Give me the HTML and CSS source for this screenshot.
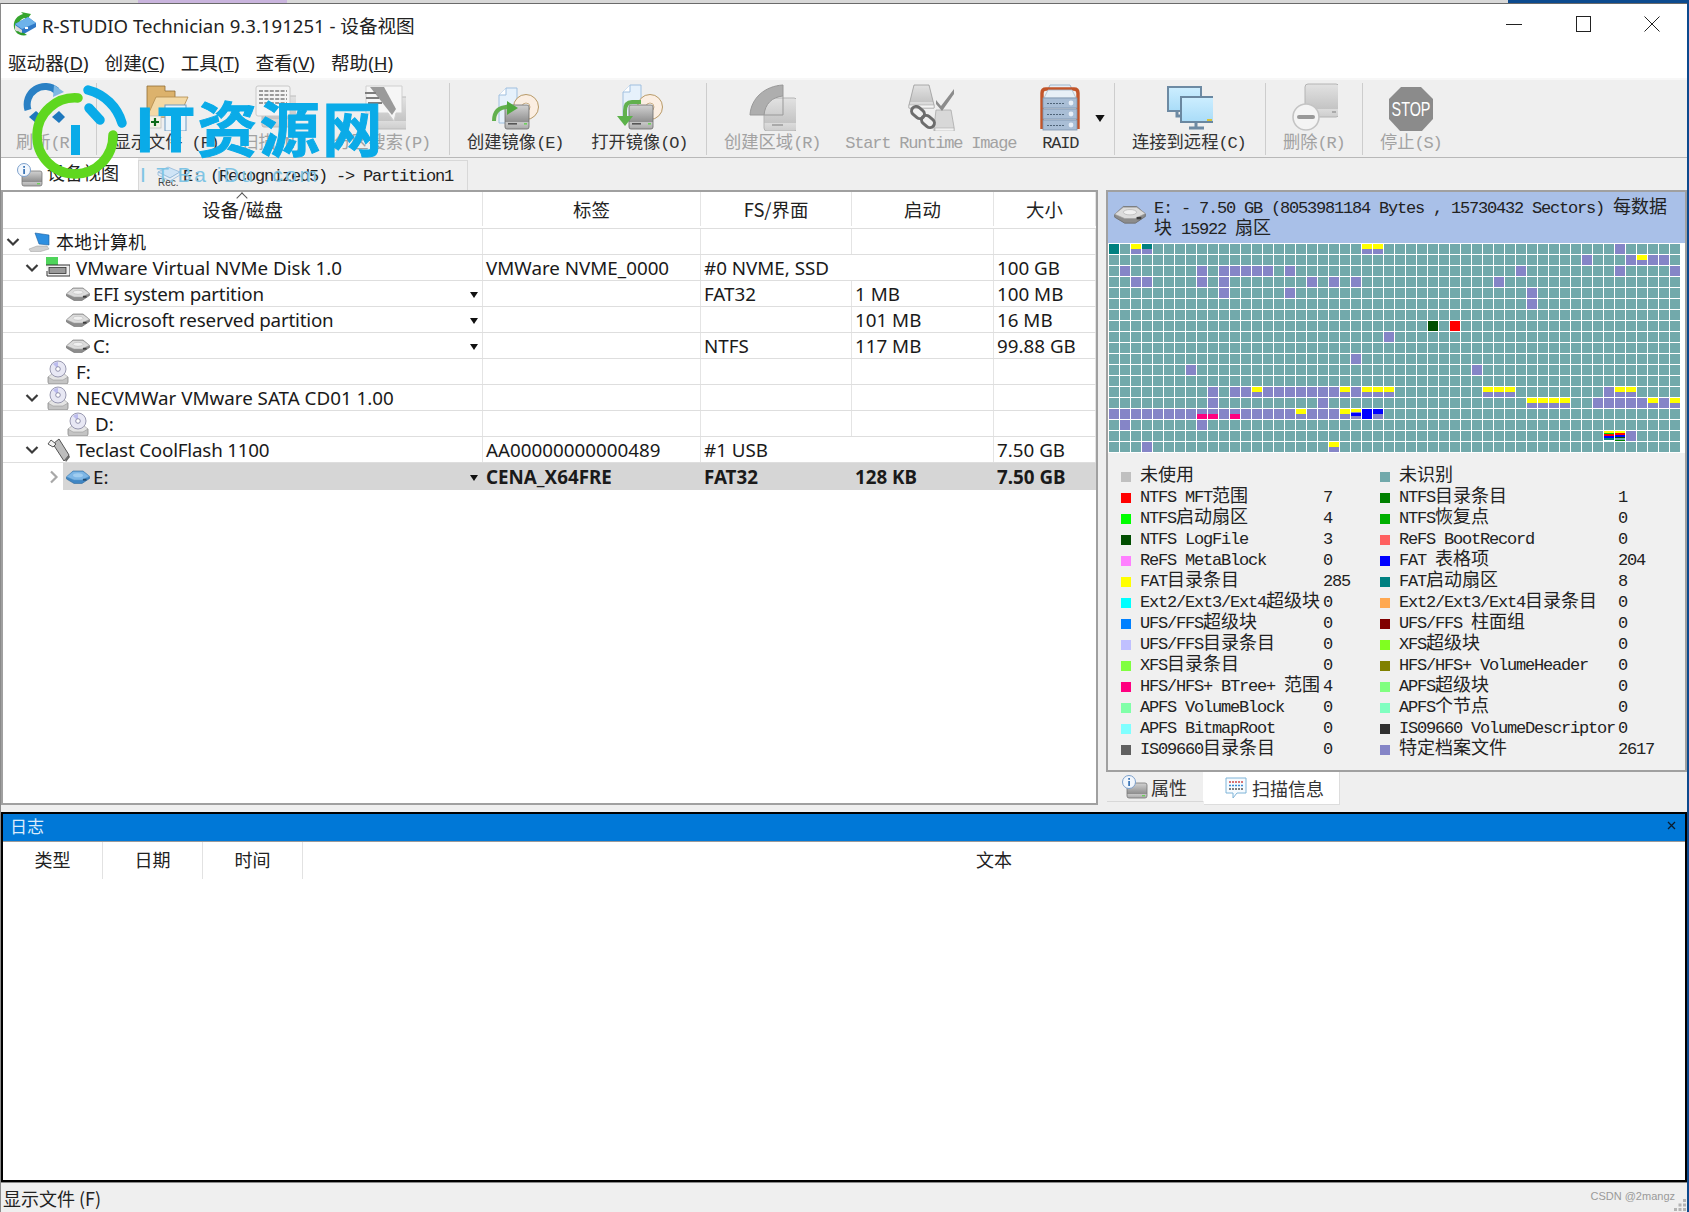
FILE: index.html
```html
<!DOCTYPE html>
<html lang="zh-CN">
<head>
<meta charset="utf-8">
<title>R-STUDIO Technician</title>
<link rel="stylesheet" href="styles.css">
</head>
<body>
<svg class="defs" width="0" height="0" aria-hidden="true">
  <defs>
    <linearGradient id="gDrive" x1="0" y1="0" x2="0" y2="1"><stop offset="0" stop-color="#d2d2d2"/><stop offset=".72" stop-color="#8e8e8e"/><stop offset=".73" stop-color="#c8c8c8"/><stop offset="1" stop-color="#a8a8a8"/></linearGradient>
    <linearGradient id="gDriveOff" x1="0" y1="0" x2="0" y2="1"><stop offset="0" stop-color="#e2e2e2"/><stop offset=".75" stop-color="#c4c4c4"/><stop offset=".76" stop-color="#dcdcdc"/><stop offset="1" stop-color="#cdcdcd"/></linearGradient>
    <linearGradient id="gMon" x1="0" y1="0" x2="0" y2="1"><stop offset="0" stop-color="#cdeeff"/><stop offset="1" stop-color="#a9dcf8"/></linearGradient>
    <symbol id="part" viewBox="0 0 24 14">
      <path d="M0.500 7 L7 1 H17 L23.500 6.500 V8.500 L16 13.500 H8 L0.500 9Z" fill="#8c8c8c" stroke="#6a6a6a" stroke-width=".6"/>
      <path d="M0.500 6.800 L8 10 H16 L23.500 6.300 L17 1.500 H7Z" fill="#dcdcdc" stroke="#a0a0a0" stroke-width=".5"/>
      <ellipse cx="12" cy="5.300" rx="5" ry="2" fill="#f0f0f0" stroke="#b0b0b0" stroke-width=".5"/>
      <rect x="17" y="8.800" width="3.500" height="1.800" fill="#3c3c3c"/>
    </symbol>
    <symbol id="partblue" viewBox="0 0 24 14">
      <path d="M0.500 7 L7 1 H17 L23.500 6.500 V8.500 L16 13.500 H8 L0.500 9Z" fill="#3f86c4" stroke="#2f6a9c" stroke-width=".6"/>
      <path d="M0.500 6.800 L8 10 H16 L23.500 6.300 L17 1.500 H7Z" fill="#7db6e6" stroke="#5a94c4" stroke-width=".5"/>
      <ellipse cx="12" cy="5.300" rx="5" ry="2" fill="#a0cdf0"/>
      <rect x="17" y="8.800" width="3.500" height="1.800" fill="#204a70"/>
    </symbol>
    <symbol id="cd" viewBox="0 0 24 24">
      <path d="M2 17 H22 V22 Q22 24 20 24 H4 Q2 24 2 22Z" fill="#c4c4c4" stroke="#888" stroke-width=".8"/>
      <path d="M2 17 L7 13 H17 L22 17 L17 20 H7Z" fill="#e4e4e4" stroke="#999" stroke-width=".6"/>
      <circle cx="12" cy="9" r="8" fill="#e8e8f4" stroke="#8e8ea8" stroke-width=".9"/>
      <path d="M7 4 A7 7 0 0 1 12 2 L12 9Z" fill="#bcbcee"/>
      <circle cx="12" cy="9" r="2.300" fill="#fff" stroke="#7a7a9a" stroke-width=".8"/>
    </symbol>
    <symbol id="chev" viewBox="0 0 14 10"><path d="M1.500 2 L7 7.500 L12.500 2" fill="none" stroke="#3a3a3a" stroke-width="2.200"/></symbol>
    <symbol id="tri" viewBox="0 0 8 6"><path d="M0 0H8L4 6Z" fill="#111"/></symbol>
    <symbol id="idrive" viewBox="0 0 26 24">
      <rect x="5" y="8" width="20" height="15" rx="2" fill="url(#gDrive)" stroke="#777" stroke-width=".8"/>
      <rect x="20" y="20" width="3" height="1.400" fill="#6ecf5c"/>
      <circle cx="7" cy="7" r="6.500" fill="#f2f7fd" stroke="#7ca0cc"/>
      <rect x="6.200" y="6" width="1.800" height="5" fill="#3f78b8"/>
      <rect x="6.200" y="3" width="1.800" height="1.800" fill="#3f78b8"/>
    </symbol>
  </defs>
</svg>
<div class="desk">
  <div class="strip"><span class="s-a"></span><span class="s-b"></span><span class="s-c"></span><span class="s-d"></span></div>
  <div class="window">
    <header class="titlebar">
      <svg class="appicon" width="25" height="24" viewBox="0 0 25 24">
        <path d="M4 20 C-1 13 3 4 11 2 L9 0 L19 2 L14 9 L13 6 C7 7 5 13 8 20Z" fill="#36a52e"/>
        <path d="M3 12 L16 5 L24 11 V15 L10 23 L3 17Z" fill="#2f78c6"/>
        <path d="M3 12 L10 17 L24 11 L16 5Z" fill="#6db3ea"/>
        <path d="M3 13 L10 18 V23 L3 18Z" fill="#d9d9d9"/>
        <path d="M4 20 C6 23 11 24 15 23 L12 21 C9 21 7 20 6 19Z" fill="#2e9c2a"/>
        <rect x="13" y="15" width="3" height="2" fill="#fff"/>
      </svg>
      <span class="apptitle">R-STUDIO Technician 9.3.191251 - 设备视图</span>
      <div class="winctl">
        <svg width="16" height="16" viewBox="0 0 16 16"><path d="M0 8.500H16" stroke="#222"/></svg>
        <svg width="16" height="16" viewBox="0 0 16 16"><rect x="1.500" y=".5" width="14" height="15" fill="none" stroke="#222"/></svg>
        <svg width="16" height="16" viewBox="0 0 16 16"><path d="M.5 .5L15.500 15.500M15.500 .5L.5 15.500" stroke="#222"/></svg>
      </div>
    </header>
    <nav class="menubar">
      <span>驱动器(<u>D</u>)</span><span>创建(<u>C</u>)</span><span>工具(<u>T</u>)</span><span>查看(<u>V</u>)</span><span>帮助(<u>H</u>)</span>
    </nav>
    <div class="toolbar">
      <div class="tgroup g1">
        <div class="tbtn off">
          <svg width="48" height="48" viewBox="0 0 48 48"><path d="M5 27 A18 18 0 0 1 34 8" fill="none" stroke="#2a80c4" stroke-width="7"/><path d="M31 2 L41 9 L30 14Z" fill="#7db8e4"/><path d="M6 34 L13 28 L20 34 L13 40Z" fill="#1e78bd"/><path d="M29 34 L36 28 L42 34 L36 40Z" fill="#1e78bd"/></svg>
          <span class="lbl"><span class="c">刷新</span>(R)</span>
        </div>
      </div>
      <div class="tgroup g2">
        <div class="tbtn">
          <svg width="48" height="48" viewBox="0 0 48 48">
            <path d="M5 3 H23 V8 H33 V34 H5Z" fill="#dcb26c" stroke="#8f6d35" stroke-width=".8"/>
            <path d="M5 34 L14 14 H46 L37 34Z" fill="#f3d9a6" stroke="#b08a4c" stroke-width=".8"/>
            <rect x="23" y="22" width="21" height="26" fill="#eaf4fb" stroke="#6f9cc4"/>
            <rect x="30" y="28" width="8" height="14" fill="#fff" stroke="#b8cfe2" stroke-width=".6"/>
            <rect x="7" y="33" width="12" height="12" fill="#f4f4e8" stroke="#bbb" stroke-width=".7"/>
            <path d="M13 35 V43 M9 39 H17" stroke="#0e6b1a" stroke-width="2.200"/>
          </svg>
          <span class="lbl"><span class="c">显示文件</span> (F)</span>
        </div>
        <div class="tbtn off">
          <svg width="48" height="48" viewBox="0 0 48 48">
            <rect x="14" y="13" width="38" height="31" rx="2" fill="url(#gDriveOff)" stroke="#bbb"/>
            <rect x="8" y="3" width="34" height="30" rx="2" fill="#f4f4f4" stroke="#c8c8c8"/>
            <path d="M11 8H39M11 12H39M11 16H39M11 20H39" stroke="#9a9a9a" stroke-width="2" stroke-dasharray="4 1.400"/>
          </svg>
          <span class="lbl"><span class="c">扫描</span>(N)</span>
        </div>
        <div class="tbtn off">
          <svg width="48" height="48" viewBox="0 0 48 48">
            <rect x="14" y="14" width="36" height="32" rx="2" fill="url(#gDriveOff)" stroke="#bbb"/>
            <path d="M8 3 H44 V30 L38 30 L36 38 L30 30 H8Z" fill="#f6f6f6" stroke="#cfcfcf"/>
            <path d="M12 4 H26 L38 26 L34 32 Z" fill="#9a9a9a"/>
            <path d="M7 10H18M8 15H21M10 20H24" stroke="#7e7e7e" stroke-width="2"/>
          </svg>
          <span class="lbl"><span class="c">分区搜索</span>(P)</span>
        </div>
      </div>
      <div class="tgroup g3">
        <div class="tbtn">
          <svg width="48" height="48" viewBox="0 0 48 48">
            <path d="M8 12 L15 5 H26 V40 H8Z" fill="#e6f1fb" stroke="#9fbfdf"/>
            <path d="M15 5 V12 H8" fill="#fff" stroke="#9fbfdf"/>
            <circle cx="35" cy="24" r="12.500" fill="#fbeee2" stroke="#b89a68"/>
            <circle cx="35" cy="24" r="4" fill="#fff" stroke="#c8ad85"/>
            <rect x="14" y="22" width="24" height="24" rx="2" fill="url(#gDrive)" stroke="#6a6a6a" stroke-width=".8"/>
            <rect x="17" y="40" width="9" height="1.600" fill="#555"/><rect x="33" y="40" width="3" height="1.600" fill="#6ecf5c"/>
            <path d="M3 38 C3 28 8 24 17 24" fill="none" stroke="#62b04e" stroke-width="4"/>
            <path d="M16 18 L27 25 L16 32Z" fill="#4fa83e"/>
          </svg>
          <span class="lbl"><span class="c">创建镜像</span>(E)</span>
        </div>
        <div class="tbtn">
          <svg width="48" height="48" viewBox="0 0 48 48">
            <path d="M8 9 L15 2 H26 V38 H8Z" fill="#e6f1fb" stroke="#9fbfdf"/>
            <path d="M15 2 V9 H8" fill="#fff" stroke="#9fbfdf"/>
            <circle cx="35" cy="24" r="12.500" fill="#fbeee2" stroke="#b89a68"/>
            <circle cx="35" cy="24" r="4" fill="#fff" stroke="#c8ad85"/>
            <rect x="14" y="22" width="24" height="24" rx="2" fill="url(#gDrive)" stroke="#6a6a6a" stroke-width=".8"/>
            <rect x="17" y="40" width="9" height="1.600" fill="#555"/><rect x="33" y="40" width="3" height="1.600" fill="#6ecf5c"/>
            <path d="M26 19 H17 C12 19 10 22 10 28 V35" fill="none" stroke="#62b04e" stroke-width="4"/>
            <path d="M2 33 H18 L10 43Z" fill="#5cb24a"/>
          </svg>
          <span class="lbl"><span class="c">打开镜像</span>(O)</span>
        </div>
      </div>
      <div class="tgroup g4">
        <div class="tbtn off">
          <svg width="48" height="48" viewBox="0 0 48 48">
            <rect x="16" y="15" width="33" height="33" rx="3" fill="url(#gDriveOff)" stroke="#b4b4b4"/>
            <rect x="24" y="41" width="11" height="2" fill="#aaa"/>
            <path d="M35 2 V13 C24 14 17 21 16 32 H2 C3 15 17 3 35 2Z" fill="#aeaeae" stroke="#999"/>
            <path d="M35 13 V32 H16" fill="none" stroke="#999" stroke-width="1"/>
          </svg>
          <span class="lbl"><span class="c">创建区域</span>(R)</span>
        </div>
        <div class="tbtn off rt">
          <svg width="48" height="48" viewBox="0 0 48 48">
            <path d="M7 2 H22 L27 22 V25 H2 V22Z" fill="url(#gDriveOff)" stroke="#9a9a9a" stroke-width=".8"/>
            <rect x="2" y="22" width="25" height="3" fill="#f4f4f4" stroke="#aaa" stroke-width=".6"/>
            <path d="M29 27 H44 L47 44 V48 H27 V44Z" fill="#d8d8d8" stroke="#aaa" stroke-width=".8"/>
            <rect x="28" y="45" width="19" height="3" fill="#f2f2f2" stroke="#aaa" stroke-width=".6"/>
            <path d="M29 17 L34 23 L47 6 L47 11 L35 28 L29 21Z" fill="#8c8c8c"/>
            <g fill="none" stroke="#6c6c6c" stroke-width="3"><rect x="4" y="25" width="14" height="9" rx="4.500" transform="rotate(40 11 29.500)"/><rect x="14" y="34" width="14" height="9" rx="4.500" transform="rotate(40 21 38.500)"/></g>
          </svg>
          <span class="lbl">Start Runtime Image</span>
        </div>
        <div class="tbtn raid">
          <svg width="48" height="48" viewBox="0 0 48 48">
            <path d="M12 6 L14 2 H34 L36 6Z" fill="#e6eef6" stroke="#9db4c9"/>
            <path d="M6 46 V10 Q6 6 10 6 H38 Q42 6 42 10 V46" fill="none" stroke="#c2552a" stroke-width="3.400"/>
            <path d="M8 15 L12 7 H36 L40 15Z" fill="#e8f0f7" stroke="#a6bacd" stroke-width=".8"/>
            <g fill="#a9bed6" stroke="#7e95ae" stroke-width=".8">
              <rect x="7" y="15" width="34" height="10"/><rect x="7" y="26" width="34" height="10"/><rect x="7" y="37" width="34" height="10"/>
            </g>
            <g stroke="#4f6478" stroke-width="1.200" stroke-dasharray="2 1">
              <path d="M11 20.500H28M11 31.500H28M11 42.500H28"/>
            </g>
            <g fill="#e8eff8"><circle cx="35" cy="20" r="2.400"/><circle cx="35" cy="31" r="2.400"/><circle cx="35" cy="42" r="2.400"/></g>
          </svg>
          <span class="lbl">RAID</span>
        </div>
        <svg class="raidarrow" width="12" height="7"><use href="#tri"/></svg>
      </div>
      <div class="tgroup g5">
        <div class="tbtn">
          <svg width="48" height="48" viewBox="0 0 48 48">
            <rect x="3" y="4" width="33" height="24" fill="url(#gMon)" stroke="#6d8aa3" stroke-width="2"/>
            <path d="M12 28V33H19" fill="none" stroke="#6d8aa3" stroke-width="3"/>
            <rect x="16" y="14" width="33" height="25" fill="url(#gMon)" stroke="#6a87a0" stroke-width="2"/>
            <rect x="42" y="36" width="5" height="2" fill="#d8c23a"/>
            <path d="M31 40V44M24 45H39" stroke="#6d8aa3" stroke-width="3"/>
          </svg>
          <span class="lbl"><span class="c">连接到远程</span>(C)</span>
        </div>
      </div>
      <div class="tgroup g6">
        <div class="tbtn off">
          <svg width="48" height="48" viewBox="0 0 48 48">
            <rect x="15" y="1" width="34" height="33" rx="3" fill="url(#gDriveOff)" stroke="#b4b4b4"/>
            <rect x="21" y="28" width="6" height="2" fill="#aaa"/><rect x="42" y="28" width="4" height="2" fill="#aaa"/>
            <circle cx="16" cy="34" r="13" fill="#f4f4f4" stroke="#c4c4c4" stroke-width="1.600"/>
            <rect x="7" y="32" width="18" height="4" rx="2" fill="#999"/>
          </svg>
          <span class="lbl"><span class="c">删除</span>(R)</span>
        </div>
      </div>
      <div class="tgroup g7">
        <div class="tbtn off">
          <svg width="48" height="48" viewBox="0 0 48 48">
            <path d="M14 4 H34 L46 16 V36 L34 49 H14 L2 36 V16Z" fill="#8b8b8b"/>
            <text class="stop" transform="translate(24 33) scale(.8 1.15)">STOP</text>
          </svg>
          <span class="lbl"><span class="c">停止</span>(S)</span>
        </div>
      </div>
    </div>
    <div class="viewtabs">
      <div class="vtab active">
        <svg width="26" height="24"><use href="#idrive"/></svg>
        <span class="c">设备视图</span>
      </div>
      <div class="vtab">
        <svg width="26" height="24" viewBox="0 0 26 24"><path d="M2 8 L12 3 L24 8 L14 14Z" fill="#cfe4f6" stroke="#8ab2d4" stroke-width=".7"/><path d="M2 8 V11 L14 17 L24 11 V8 L14 14Z" fill="#e6eff7" stroke="#8ab2d4" stroke-width=".7"/><text x="2" y="22" class="rec">Rec.</text></svg>
        <span>E: (Recognized5) -&gt; Partition1</span>
      </div>
    </div>
    <div class="panes">
      <section class="devices">
        <div class="row head">
          <div class="cell sorted">设备/磁盘</div><div class="cell">标签</div><div class="cell">FS/界面</div><div class="cell">启动</div><div class="cell">大小</div>
        </div>
        <div class="row">
          <div class="cell name l0"><svg class="chev" width="14" height="10"><use href="#chev"/></svg><svg class="ico" width="24" height="20" viewBox="0 0 24 20"><path d="M8 1 L22 3 V13 L12 12Z" fill="#2e8fe0" stroke="#1c5f9e" stroke-width=".6"/><path d="M2 17 L10 14 H20 L22 17 L12 20H4Z" fill="#d0d0d0" stroke="#9a9a9a" stroke-width=".5"/></svg><span class="zh">本地计算机</span></div><div class="cell"></div><div class="cell"></div><div class="cell"></div><div class="cell"></div>
        </div>
        <div class="row">
          <div class="cell name l1"><svg class="chev" width="14" height="10"><use href="#chev"/></svg><svg class="ico" width="24" height="22" viewBox="0 0 24 22"><path d="M0 0H12V8H0Z" fill="#4ed45a"/><path d="M0 8 H24 V19 H1 V14" fill="#f0f0f0" stroke="#333"/><rect x="3" y="10.500" width="17" height="6" fill="#9a9a9a" stroke="#333" stroke-width=".8"/></svg><span>VMware Virtual NVMe Disk 1.0</span></div><div class="cell">VMWare NVME_0000</div><div class="cell span2">#0 NVME, SSD</div><div class="cell">100 GB</div>
        </div>
        <div class="row">
          <div class="cell name l2"><span class="chev"></span><svg class="ico" width="24" height="14"><use href="#part"/></svg><span class="tight">EFI system partition</span><svg class="drop" width="8" height="6"><use href="#tri"/></svg></div><div class="cell"></div><div class="cell">FAT32</div><div class="cell">1 MB</div><div class="cell">100 MB</div>
        </div>
        <div class="row">
          <div class="cell name l2"><span class="chev"></span><svg class="ico" width="24" height="14"><use href="#part"/></svg><span class="tight">Microsoft reserved partition</span><svg class="drop" width="8" height="6"><use href="#tri"/></svg></div><div class="cell"></div><div class="cell"></div><div class="cell">101 MB</div><div class="cell">16 MB</div>
        </div>
        <div class="row">
          <div class="cell name l2"><span class="chev"></span><svg class="ico" width="24" height="14"><use href="#part"/></svg><span>C:</span><svg class="drop" width="8" height="6"><use href="#tri"/></svg></div><div class="cell"></div><div class="cell">NTFS</div><div class="cell">117 MB</div><div class="cell">99.88 GB</div>
        </div>
        <div class="row">
          <div class="cell name l1"><span class="chev"></span><svg class="ico" width="24" height="24"><use href="#cd"/></svg><span>F:</span></div><div class="cell"></div><div class="cell"></div><div class="cell"></div><div class="cell"></div>
        </div>
        <div class="row">
          <div class="cell name l1"><svg class="chev" width="14" height="10"><use href="#chev"/></svg><svg class="ico" width="24" height="24"><use href="#cd"/></svg><span>NECVMWar VMware SATA CD01 1.00</span></div><div class="cell"></div><div class="cell"></div><div class="cell"></div><div class="cell"></div>
        </div>
        <div class="row">
          <div class="cell name l2"><span class="chev"></span><svg class="ico" width="24" height="24"><use href="#cd"/></svg><span class="pad">D:</span></div><div class="cell"></div><div class="cell"></div><div class="cell"></div><div class="cell"></div>
        </div>
        <div class="row">
          <div class="cell name l1"><svg class="chev" width="14" height="10"><use href="#chev"/></svg><svg class="ico" width="24" height="24" viewBox="0 0 24 24"><path d="M7 6 L13 1 L23 17 L18 23 Z" fill="#bdbdbd" stroke="#555"/><path d="M2 6 L5 2 L10 6 L7 9Z" fill="#f4f4f4" stroke="#555"/><path d="M19 22 L23 17 L24 19 L20 24Z" fill="#666"/></svg><span class="tight">Teclast CoolFlash 1100</span></div><div class="cell">AA00000000000489</div><div class="cell span2">#1 USB</div><div class="cell">7.50 GB</div>
        </div>
        <div class="row sel">
          <div class="cell name l2"><svg class="chev more" width="10" height="14" viewBox="0 0 10 14"><path d="M2 1.500 L7.500 7 L2 12.500" fill="none" stroke="#a8a8a8" stroke-width="2.200"/></svg><svg class="ico" width="24" height="14"><use href="#partblue"/></svg><span>E:</span><svg class="drop" width="8" height="6"><use href="#tri"/></svg></div><div class="cell">CENA_X64FRE</div><div class="cell">FAT32</div><div class="cell">128 KB</div><div class="cell">7.50 GB</div>
        </div>
      </section>
      <div class="side">
        <section class="scan">
          <div class="scanhead">
            <svg class="headico" width="32" height="19"><use href="#part"/></svg>
            <p>E: - 7.50 GB (8053981184 Bytes , 15730432 Sectors) <span class="c">每数据块</span> 15922 <span class="c">扇区</span></p>
          </div>
          <div class="mapwrap"><div class="map" id="map"></div></div>
          <div class="legend">
            <div class="lg"><i class="k-unused"></i><span><span class="c">未使用</span></span><span></span></div>
            <div class="lg"><i class="k-unk"></i><span><span class="c">未识别</span></span><span></span></div>
            <div class="lg"><i class="k-mft"></i><span>NTFS MFT<span class="c">范围</span></span><span>7</span></div>
            <div class="lg"><i class="k-ntdir"></i><span>NTFS<span class="c">目录条目</span></span><span>1</span></div>
            <div class="lg"><i class="k-ntboot"></i><span>NTFS<span class="c">启动扇区</span></span><span>4</span></div>
            <div class="lg"><i class="k-ntres"></i><span>NTFS<span class="c">恢复点</span></span><span>0</span></div>
            <div class="lg"><i class="k-ntlog"></i><span>NTFS LogFile</span><span>3</span></div>
            <div class="lg"><i class="k-rboot"></i><span>ReFS BootRecord</span><span>0</span></div>
            <div class="lg"><i class="k-rmeta"></i><span>ReFS MetaBlock</span><span>0</span></div>
            <div class="lg"><i class="k-fat"></i><span>FAT <span class="c">表格项</span></span><span>204</span></div>
            <div class="lg"><i class="k-fatdir"></i><span>FAT<span class="c">目录条目</span></span><span>285</span></div>
            <div class="lg"><i class="k-fatboot"></i><span>FAT<span class="c">启动扇区</span></span><span>8</span></div>
            <div class="lg"><i class="k-extsb"></i><span>Ext2/Ext3/Ext4<span class="c">超级块</span></span><span>0</span></div>
            <div class="lg"><i class="k-extdir"></i><span>Ext2/Ext3/Ext4<span class="c">目录条目</span></span><span>0</span></div>
            <div class="lg"><i class="k-ufssb"></i><span>UFS/FFS<span class="c">超级块</span></span><span>0</span></div>
            <div class="lg"><i class="k-ufscg"></i><span>UFS/FFS <span class="c">柱面组</span></span><span>0</span></div>
            <div class="lg"><i class="k-ufsdir"></i><span>UFS/FFS<span class="c">目录条目</span></span><span>0</span></div>
            <div class="lg"><i class="k-xfssb"></i><span>XFS<span class="c">超级块</span></span><span>0</span></div>
            <div class="lg"><i class="k-xfsdir"></i><span>XFS<span class="c">目录条目</span></span><span>0</span></div>
            <div class="lg"><i class="k-hfsvol"></i><span>HFS/HFS+ VolumeHeader</span><span>0</span></div>
            <div class="lg"><i class="k-hfsbt"></i><span>HFS/HFS+ BTree+ <span class="c">范围</span></span><span>4</span></div>
            <div class="lg"><i class="k-apsb"></i><span>APFS<span class="c">超级块</span></span><span>0</span></div>
            <div class="lg"><i class="k-apvol"></i><span>APFS VolumeBlock</span><span>0</span></div>
            <div class="lg"><i class="k-apnode"></i><span>APFS<span class="c">个节点</span></span><span>0</span></div>
            <div class="lg"><i class="k-apbmp"></i><span>APFS BitmapRoot</span><span>0</span></div>
            <div class="lg"><i class="k-isovol"></i><span>IS09660 VolumeDescriptor</span><span>0</span></div>
            <div class="lg"><i class="k-isodir"></i><span>IS09660<span class="c">目录条目</span></span><span>0</span></div>
            <div class="lg"><i class="k-spec"></i><span><span class="c">特定档案文件</span></span><span>2617</span></div>
          </div>
        </section>
        <div class="sidetabs">
          <div class="stab"><svg width="26" height="24"><use href="#idrive"/></svg><span class="c">属性</span></div>
          <div class="stab active">
            <svg width="22" height="22" viewBox="0 0 22 22"><path d="M1 1H21V16H12L8 21V16H1Z" fill="#f6fbff" stroke="#7fb4d8"/><path d="M4 5H18" stroke="#d04848" stroke-width="1.500" stroke-dasharray="2 1"/><path d="M4 8.500H18" stroke="#3a8ad0" stroke-width="1.500" stroke-dasharray="2 1"/><path d="M4 12H18" stroke="#555" stroke-width="1.500" stroke-dasharray="2 1"/></svg>
            <span class="c">扫描信息</span>
          </div>
        </div>
      </div>
    </div>
    <section class="log">
      <div class="logbar"><span>日志</span><svg width="9" height="9" viewBox="0 0 9 9"><path d="M1 1L8 8M8 1L1 8" stroke="#0b1b2b" stroke-width="1.300"/></svg></div>
      <div class="loghead"><div>类型</div><div>日期</div><div>时间</div><div class="wide">文本</div></div>
    </section>
    <footer class="status">
      <span>显示文件 (F)</span>
      <span class="csdn">CSDN @2mangz</span>
      <svg class="grip" width="14" height="14" viewBox="0 0 14 14"><g fill="#b4b4b4"><rect x="10" y="1" width="3" height="3"/><rect x="5.500" y="5.500" width="3" height="3"/><rect x="10" y="5.500" width="3" height="3"/><rect x="1" y="10" width="3" height="3"/><rect x="5.500" y="10" width="3" height="3"/><rect x="10" y="10" width="3" height="3"/></g></svg>
    </footer>
  </div>
  <div class="watermark" aria-label="IT资源网">
    <svg class="wm-logo" width="140" height="190" viewBox="0 0 140 190">
      <path d="M78 98 A38 38 0 1 0 113 135" fill="none" stroke="#5fd71f" stroke-width="9.500" stroke-linecap="round"/>
      <path d="M88 90 A48 48 0 0 1 122 123" fill="none" stroke="#0aabe8" stroke-width="9.500" stroke-linecap="round"/>
      <path d="M89 108 L100 120" fill="none" stroke="#0aabe8" stroke-width="9.500" stroke-linecap="round"/>
      <rect x="71" y="125" width="9" height="30" fill="#0aabe8"/>
    </svg>
    <div class="wm-text">IT资源网</div>
    <div class="wm-sub">I T.Ba iDu .com</div>
  </div>
</div>
<script src="map.js"></script>
</body>
</html>
```
FILE: styles.css
```css
* { box-sizing: border-box; }
html, body { margin: 0; padding: 0; }
body { width: 1689px; height: 1212px; overflow: hidden; background: #0c4a8e; }
.defs { position: absolute; }
.desk { position: relative; width: 1689px; height: 1212px; display: flex; flex-direction: column; }
.strip { height: 3px; display: flex; flex: none; }
.s-a { width: 138px; background: #d8d8d8; }
.s-b { width: 149px; background: #c9b4dd; }
.s-c { width: 1221px; background: #d8d8d8; }
.s-d { flex: 1; background: #0c4a8e; }
.window { flex: 1; min-height: 0; width: 1687px; display: flex; flex-direction: column; background: #efefef; border-top: 1px solid #6a6a6a; border-left: 1px solid #8a8a8a; color: #111; }

.titlebar { height: 40px; flex: none; display: flex; align-items: center; background: #fff; padding: 0 0 0 11px; }
.appicon { margin-right: 5px; }
.apptitle { font: 18.6px "Noto Sans", "Noto Sans CJK SC", sans-serif; color: #222; }
.winctl { margin-left: auto; display: flex; gap: 53px; padding-right: 27px; }
.menubar { height: 34px; flex: none; background: #fff; display: flex; gap: 16px; padding-left: 7px; align-items: center; font: 18.6px "Noto Sans", "Noto Sans CJK SC", sans-serif; color: #222; }

.toolbar { height: 80px; flex: none; display: flex; background: #efefef; border-top: 2px solid #f7f7f7; border-bottom: 1px solid #b8b8b8; font: 17px/20px "Liberation Mono", "Noto Sans CJK SC", monospace; letter-spacing: -1.2px; color: #333; }
.c { font-size: 18px; line-height: 20px; letter-spacing: 0; }
.tbtn .c { font-size: 17.3px; }
.tgroup { display: flex; align-items: flex-start; height: 72px; margin-top: 3px; border-right: 1px solid #cdcdcd; padding: 0 17px; gap: 28px; position: relative; }
.g1 { width: 96px; padding: 0 0 0 15px; }
.g2 { width: 353px; padding: 0 0 0 19px; gap: 0; }
.g2 .tbtn { width: 100px; }
.g2 .tbtn + .tbtn { margin-left: 6px; }
.g2 .tbtn:last-child { margin-left: 10px; }
.g3 { width: 257px; }
.g4 { width: 408px; gap: 25px; }
.g5 { width: 151px; }
.g6 { width: 97px; }
.g7 { border-right: 0; }
.tbtn { display: flex; flex-direction: column; align-items: center; white-space: nowrap; }
.tbtn svg { display: block; }
.raid { margin-left: -5px; }
.lbl { margin-top: 3px; height: 20px; }
.off { color: #a2a2a2; }
.raidarrow { position: absolute; left: 387px; top: 32px; }
.stop { font: 400 18px "Liberation Sans", sans-serif; fill: #fff; text-anchor: middle; letter-spacing: 0; }

.viewtabs { height: 32px; flex: none; display: flex; align-items: flex-end; background: #efefef; font: 17px "Liberation Mono", "Noto Sans CJK SC", monospace; letter-spacing: -1.2px; color: #222; }
.vtab { height: 30px; display: flex; align-items: center; gap: 1px; width: 330px; padding: 1px 0 0 17px; border: 1px solid #d8d8d8; border-bottom: 0; white-space: pre; }
.vtab.active { width: 137px; height: 32px; background: #fff; padding-left: 16px; border: 0; gap: 4px; }
.rec { font: 10px "Liberation Sans", sans-serif; fill: #444; letter-spacing: 0; }

.panes { height: 622px; flex: none; display: flex; justify-content: space-between; background: #efefef; }
.devices { width: 1097px; height: 615px; background: #fff; border: 2px solid #a0a0a0; font: 18.8px "Noto Sans", "Noto Sans CJK SC", sans-serif; color: #1a1a1a; }
.zh { font-size: 18px; }
.tight { letter-spacing: -.2px; }
.row { display: grid; grid-template-columns: 480px 218px 151px 142px 102px; height: 26px; border-bottom: 1px solid #dedede; }
.row.head { height: 37px; font-family: "Noto Sans CJK SC", "Noto Sans", sans-serif; font-size: 18.4px; color: #222; padding-bottom: 2px; }
.cell { border-right: 1px solid #e4e4e4; padding-left: 3px; display: flex; align-items: center; white-space: nowrap; overflow: hidden; line-height: 24px; }
.head .cell { justify-content: center; padding-left: 0; position: relative; overflow: visible; }
.sorted::before { content: ""; position: absolute; left: 235px; top: 2px; width: 7px; height: 7px; border-left: 1px solid #555; border-top: 1px solid #555; transform: rotate(45deg); }
.span2 { grid-column: span 2; }
.name { padding-left: 0; }
.l0 { padding-left: 1px; }
.l1 { padding-left: 20px; }
.l2 { padding-left: 40px; }
.chev { width: 14px; height: 10px; margin: 0 2px; flex: none; display: block; }
.more { width: 10px; height: 14px; margin: 0 2px 0 6px; }
.ico { margin: 0 5px; flex: none; display: block; }
.l1 .ico { margin-right: 6px; }
.l2 .ico { margin-right: 3px; }
.pad { margin-left: 2px; }
.drop { margin-left: auto; margin-right: 4px; flex: none; position: relative; top: 1px; }
.sel { height: 28px; font-weight: 700; border-bottom-color: #fff; background: #d6d6d6; }
.sel .cell { border-right-color: #d6d6d6; }
.sel .name { background: linear-gradient(90deg, #fff 60px, #d6d6d6 60px); font-weight: 400; }

.side { width: 581px; height: 622px; display: flex; flex-direction: column; }
.scan { height: 582px; flex: none; border: 2px solid #a0a0a0; background: #f0f0f0; font: 17px/21px "Liberation Mono", "Noto Sans CJK SC", monospace; letter-spacing: -1.2px; color: #222; }
.scanhead { height: 51px; background: #a9c0e8; display: flex; padding: 6px 12px 0 6px; gap: 8px; }
.headico { flex: none; margin-top: 7px; }
.scanhead p { margin: 0; }
.mapwrap { background: #fff; padding: 1px; height: 210px; }
.map { display: grid; grid-template-columns: repeat(52, 10px); grid-auto-rows: 10px; gap: 1px; }
.cl { background: #72a9ab; }
.cl.p { background: #8585c7; }
.cl.t { background: #008080; }
.cl.g { background: #004d00; }
.cl.r { background: #ff0000; }
.cl.b { background: #0000ff; }
.cl.yp { background: linear-gradient(#ffff00 5px, #8585c7 5px); }
.cl.tp { background: linear-gradient(#008080 5px, #8585c7 5px); }
.cl.pk { background: linear-gradient(#8585c7 5px, #ff0080 5px); }
.cl.bp { background: linear-gradient(#0000ff 5px, #8585c7 5px); }
.cl.yb { background: linear-gradient(#ffff00 3px, #8585c7 3px, #8585c7 4px, #0000ff 4px, #0000ff 7px, #8585c7 7px); }
.cl.st1 { background: linear-gradient(#ffff00 2px, #00d000 2px, #00d000 3px, #ff0000 3px, #ff0000 5px, #0000ff 5px, #0000ff 7px, #008080 7px, #008080 9px, #fff 9px); }
.cl.st2 { background: linear-gradient(#ffff00 2px, #ff0000 2px, #ff0000 4px, #0000ff 4px, #0000ff 6px, #004d00 6px, #004d00 7px, #72a9ab 7px, #72a9ab 9px, #008000 9px); }
.legend { display: grid; grid-template-columns: 259px 259px; padding: 13px 0 0 13px; }
.lg { display: grid; grid-template-columns: 10px 174px auto; column-gap: 9px; height: 21px; align-items: center; white-space: nowrap; }
.lg:nth-child(even) { grid-template-columns: 10px 210px auto; }
.lg > span { display: block; height: 21px; overflow: visible; }
.lg i { width: 10px; height: 10px; display: block; }
.k-unused { background: #c0c0c0; } .k-unk { background: #72a9ab; }
.k-mft { background: #ff0000; } .k-ntdir { background: #008000; }
.k-ntboot { background: #00ff00; } .k-ntres { background: #00b000; }
.k-ntlog { background: #004d00; } .k-rboot { background: #ff6060; }
.k-rmeta { background: #ff80ff; } .k-fat { background: #0000ff; }
.k-fatdir { background: #ffff00; } .k-fatboot { background: #008080; }
.k-extsb { background: #00ffff; } .k-extdir { background: #ffa850; }
.k-ufssb { background: #0080ff; } .k-ufscg { background: #800000; }
.k-ufsdir { background: #c0c0ff; } .k-xfssb { background: #80ff20; }
.k-xfsdir { background: #80ff40; } .k-hfsvol { background: #808000; }
.k-hfsbt { background: #ff0080; } .k-apsb { background: #80ff80; }
.k-apvol { background: #80ffa8; } .k-apnode { background: #80ffc0; }
.k-apbmp { background: #80ffff; } .k-isovol { background: #303030; }
.k-isodir { background: #606060; } .k-spec { background: #8585c7; }

.sidetabs { flex: 1; display: flex; align-items: flex-start; padding-left: 1px; font: 18px "Noto Sans CJK SC", sans-serif; color: #333; }
.stab { height: 30px; width: 97px; display: flex; align-items: center; gap: 3px; padding-left: 15px; border-right: 1px solid #fff; border-bottom: 1px solid #d8d8d8; }
.stab.active { height: 33px; width: 136px; background: #fff; padding-left: 21px; gap: 5px; border-right: 1px solid #ddd; border-bottom: 1px solid #ddd; }

.log { height: 370px; flex: none; background: #fff; border: 2px solid #000; font: 18px "Noto Sans CJK SC", sans-serif; color: #222; }
.logbar { height: 28px; background: #0078d7; border-bottom: 1px solid #9a9a9a; color: #dcecfb; display: flex; align-items: center; justify-content: space-between; padding: 0 9px 5px 7px; font-size: 17px; }
.loghead { display: flex; height: 37px; text-align: center; line-height: 35px; }
.loghead div { width: 100px; border-right: 1px solid #e2e2e2; }
.loghead .wide { flex: 1; border: 0; }

.status { height: 30px; flex: 1; display: flex; align-items: center; padding-left: 2px; background: #efefef; border-top: 1px solid #8a8a8a; font: 18px "Noto Sans CJK SC", "Noto Sans", sans-serif; color: #222; position: relative; }
.csdn { margin: 0 -2px 4px auto; font: 11px "Liberation Sans", sans-serif; color: #9a9a9a; }
.grip { align-self: flex-end; flex: none; }

.watermark { position: absolute; left: 0; top: 0; width: 420px; height: 190px; pointer-events: none; }
.wm-logo { position: absolute; left: 0; top: 0; }
.wm-text { position: absolute; left: 135px; top: 87px; font: 700 60px/78px "Noto Sans CJK SC", sans-serif; color: #0aabe8; white-space: nowrap; letter-spacing: 2.5px; -webkit-text-stroke: 1px #0aabe8; }
.wm-sub { position: absolute; left: 140px; top: 161px; font: 21px/28px "Liberation Sans", sans-serif; color: #7fc4e4; white-space: pre; letter-spacing: 2.5px; }
```
FILE: map.js
```js
// Sector map: cell type per "row,column"; everything else is the "unknown" colour.
var ROWS = 19, COLS = 52;
var marks = {
  0: {0:'t',2:'yp',3:'tp',23:'yp',24:'yp',46:'p'},
  1: {43:'p',47:'p',48:'yp',49:'p',50:'p'},
  2: {1:'p',8:'p',10:'p',11:'p',12:'p',13:'p',14:'p',16:'p',37:'p',46:'p',51:'p'},
  3: {2:'p',3:'p',8:'p',10:'p',18:'p',20:'p',22:'p',35:'p'},
  4: {10:'p',16:'p',38:'p'},
  5: {38:'p'},
  7: {29:'g',31:'r'},
  8: {25:'p'},
  10: {22:'p'},
  11: {7:'p',33:'p'},
  13: {9:'p',11:'p',12:'p',13:'yp',14:'p',15:'p',16:'p',17:'p',18:'p',19:'p',20:'p',21:'yp',22:'p',23:'yp',24:'yp',25:'yp',34:'yp',35:'yp',36:'yp',45:'p',46:'yp',47:'yp'},
  14: {9:'p',19:'p',38:'yp',39:'yp',40:'yp',41:'yp',44:'p',45:'p',46:'p',47:'p',48:'p',49:'yp',50:'p',51:'yp'},
  15: {0:'p',1:'p',2:'p',3:'p',4:'p',5:'p',6:'p',7:'p',8:'pk',9:'pk',10:'p',11:'pk',12:'p',13:'p',14:'p',15:'p',16:'p',17:'yp',18:'p',19:'p',20:'p',21:'yp',22:'yb',23:'b',24:'bp'},
  16: {1:'p',8:'p'},
  17: {45:'st1',46:'st2',47:'p'},
  18: {3:'p',20:'yp'}
};
var map = document.getElementById('map');
for (var r = 0; r < ROWS; r++) {
  for (var c = 0; c < COLS; c++) {
    var cell = document.createElement('div');
    var kind = marks[r] && marks[r][c];
    cell.className = kind ? 'cl ' + kind : 'cl';
    map.appendChild(cell);
  }
}
```
